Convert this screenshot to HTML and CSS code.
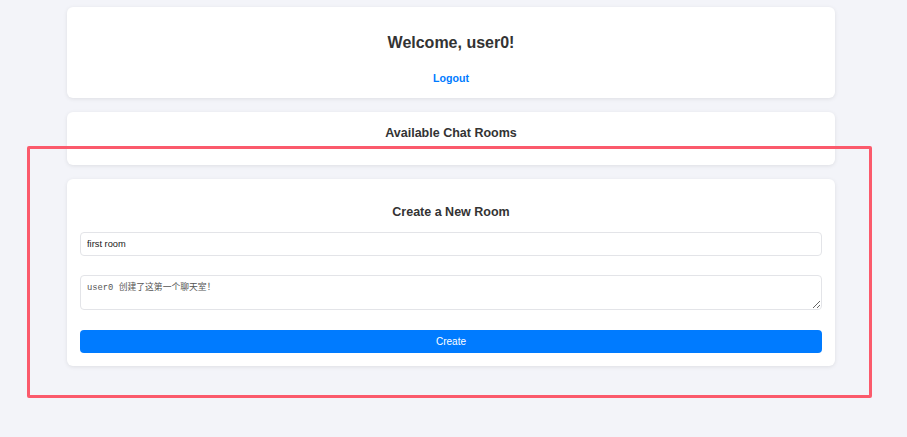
FILE: index.html
```html
<!DOCTYPE html>
<html lang="en">
<head>
<meta charset="utf-8">
<title>Chat Rooms</title>
<link rel="stylesheet" href="styles.css">
</head>
<body>
<main class="container">
  <section class="card card-welcome">
    <h2 class="welcome-title">Welcome, user0!</h2>
    <a class="logout" href="#">Logout</a>
  </section>
  <section class="card card-rooms">
    <h3 class="card-title">Available Chat Rooms</h3>
  </section>
  <section class="card card-create">
    <h3 class="card-title">Create a New Room</h3>
    <form class="create-form">
      <input class="field field-input" type="text" value="first room">
      <textarea class="field field-textarea">user0 创建了这第一个聊天室！</textarea>
      <button class="btn-create" type="button">Create</button>
    </form>
  </section>
</main>
<div class="highlight"></div>
</body>
</html>
```

FILE: styles.css
```css
* {
  box-sizing: border-box;
}

html, body {
  margin: 0;
  padding: 0;
}

body {
  background: #f3f4f9;
  font-family: "Liberation Sans", Arial, sans-serif;
  color: #333;
  height: 437px;
  overflow: hidden;
}

.container {
  width: 768px;
  margin-left: 67px;
  padding-top: 7px;
  display: flex;
  flex-direction: column;
  gap: 14px;
}

.card {
  background: #fff;
  border-radius: 6px;
  box-shadow: 0 1px 4px rgba(0, 0, 0, 0.09);
  padding: 13px;
}

.card-welcome {
  height: 91px;
  display: flex;
  flex-direction: column;
  align-items: center;
}

.welcome-title {
  margin: 14px 0 0;
  font-size: 16px;
  line-height: 18px;
  font-weight: bold;
  color: #333;
}

.logout {
  margin-top: 20px;
  font-size: 10.6px;
  line-height: 13px;
  font-weight: bold;
  color: #007bff;
  text-decoration: none;
}

.card-rooms {
  height: 53px;
}

.card-title {
  margin: 0;
  text-align: center;
  font-size: 12.5px;
  line-height: 15px;
  font-weight: bold;
  color: #333;
}

.card-rooms .card-title {
  margin-top: 1px;
}

.card-create {
  height: 187px;
}

.card-create .card-title {
  margin-top: 12.5px;
}

.create-form {
  display: flex;
  flex-direction: column;
  margin-top: 12.5px;
}

.field {
  width: 100%;
  border: 1px solid #e3e4e8;
  border-radius: 4px;
  background: #fff;
  margin: 0;
  outline: none;
}

.field-input {
  height: 24px;
  padding: 0 6px;
  font-family: "Liberation Sans", Arial, sans-serif;
  font-size: 9.3px;
  color: #1a1a1a;
}

.field-textarea {
  height: 35px;
  margin-top: 19px;
  padding: 6px 6px;
  font-family: "Liberation Mono", "Noto Sans CJK SC", monospace;
  font-size: 8.8px;
  line-height: 12px;
  color: #555;
  resize: vertical;
}

.btn-create {
  height: 23px;
  margin-top: 20px;
  width: 100%;
  border: none;
  border-radius: 4px;
  background: #007bff;
  color: #fff;
  font-family: "Liberation Sans", Arial, sans-serif;
  font-size: 10px;
  cursor: pointer;
}

.highlight {
  position: absolute;
  left: 27px;
  top: 146px;
  width: 845px;
  height: 252px;
  border: 3px solid #fb5a6c;
  border-radius: 2px;
  pointer-events: none;
}
```
